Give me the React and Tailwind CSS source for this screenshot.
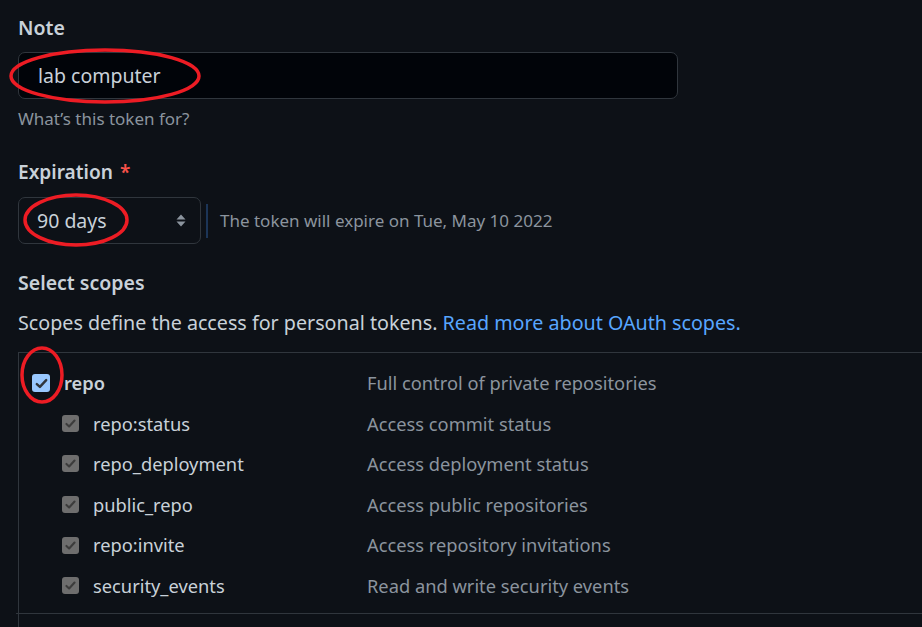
import React from "react";

const scopes = [
  { name: "repo:status", desc: "Access commit status" },
  { name: "repo_deployment", desc: "Access deployment status" },
  { name: "public_repo", desc: "Access public repositories" },
  { name: "repo:invite", desc: "Access repository invitations" },
  { name: "security_events", desc: "Read and write security events" },
];

const Check = ({ className, size = 13 }) => (
  <span className={`flex items-center justify-center rounded-[3px] ${className}`}>
    <svg viewBox="0 0 16 16" width={size} height={size}>
      <path d="M3 8.6 6.3 11.6 13 4.4" fill="none" stroke="currentColor" strokeWidth="2.6" strokeLinecap="round" strokeLinejoin="round" />
    </svg>
  </span>
);

const Marks = () => (
  <svg className="pointer-events-none absolute left-0 top-0" width="922" height="627">
    <ellipse cx="105" cy="76" rx="94" ry="26" fill="none" stroke="#ed1c24" strokeWidth="3.5" />
    <ellipse cx="76" cy="220" rx="51" ry="25" fill="none" stroke="#ed1c24" strokeWidth="3.5" />
    <ellipse cx="42" cy="375" rx="20" ry="27" fill="none" stroke="#ed1c24" strokeWidth="3.5" />
  </svg>
);

export default function App() {
  return (
    <div
      className="relative h-[627px] overflow-hidden bg-[#0d1117] pl-[18px] text-[19.5px] text-[#c9d1d9]"
      style={{ fontFamily: '"Noto Sans", "Open Sans", sans-serif' }}
    >
      <div className="pt-[15px] font-semibold leading-[26px]">Note</div>
      <div className="mt-[11px] flex h-[47px] w-[660px] items-center rounded-[7px] border border-[#30363d] bg-[#010409] pl-[19px]">
        lab computer
      </div>
      <div className="mt-[9px] text-[17px] leading-[22px] text-[#8b949e]">What’s this token for?</div>

      <div className="mt-[29px] text-[19.1px] font-semibold leading-[26px]">
        Expiration <span className="ml-[2px] text-[#f85149]">*</span>
      </div>
      <div className="mt-[12px] flex items-center">
        <div className="flex h-[47px] w-[183px] items-center justify-between rounded-[7px] border border-[#30363d] bg-[#0d1117] pl-[18px] pr-[13px]">
          <span>90 days</span>
          <svg viewBox="0 0 12 16" className="h-[17px] w-[12px] text-[#8b949e]">
            <path d="M6 2 10.5 7H1.5Z M6 14 1.5 9H10.5Z" fill="currentColor" />
          </svg>
        </div>
        <div className="ml-[5px] h-[34px] w-[2px] bg-[#1c3557]" />
        <div className="ml-[12px] text-[17px] text-[#8b949e]">The token will expire on Tue, May 10 2022</div>
      </div>

      <div className="mt-[26px] font-semibold leading-[26px]">Select scopes</div>
      <div className="mt-[14px] text-[19.7px] leading-[26px]">
        Scopes define the access for personal tokens.{" "}
        <span className="text-[#58a6ff]">Read more about OAuth scopes.</span>
      </div>

      <div className="mt-[16px] border-l border-t border-[#30363d] pt-[10px] text-[18.3px]">
        <div className="flex h-[40px] items-center">
          <div className="flex w-[348px] items-center pl-[13px]">
            <Check className="h-[18px] w-[18px] bg-[#99c8ff] text-[#30363d]" size={15} />
            <span className="ml-[14px] font-semibold">repo</span>
          </div>
          <span className="text-[#8b949e]">Full control of private repositories</span>
        </div>
        {scopes.map((s) => (
          <div key={s.name} className="flex h-[40.6px] items-center">
            <div className="flex w-[348px] items-center pl-[43px]">
              <Check className="h-[17px] w-[17px] bg-[#6e6e6e] text-[#3c3c3c]" />
              <span className="ml-[14px]">{s.name}</span>
            </div>
            <span className="text-[#8b949e]">{s.desc}</span>
          </div>
        ))}
        <div className="mt-[7px] -ml-[3px] h-[40px] border-t border-[#30363d]" />
      </div>
      <Marks />
    </div>
  );
}
